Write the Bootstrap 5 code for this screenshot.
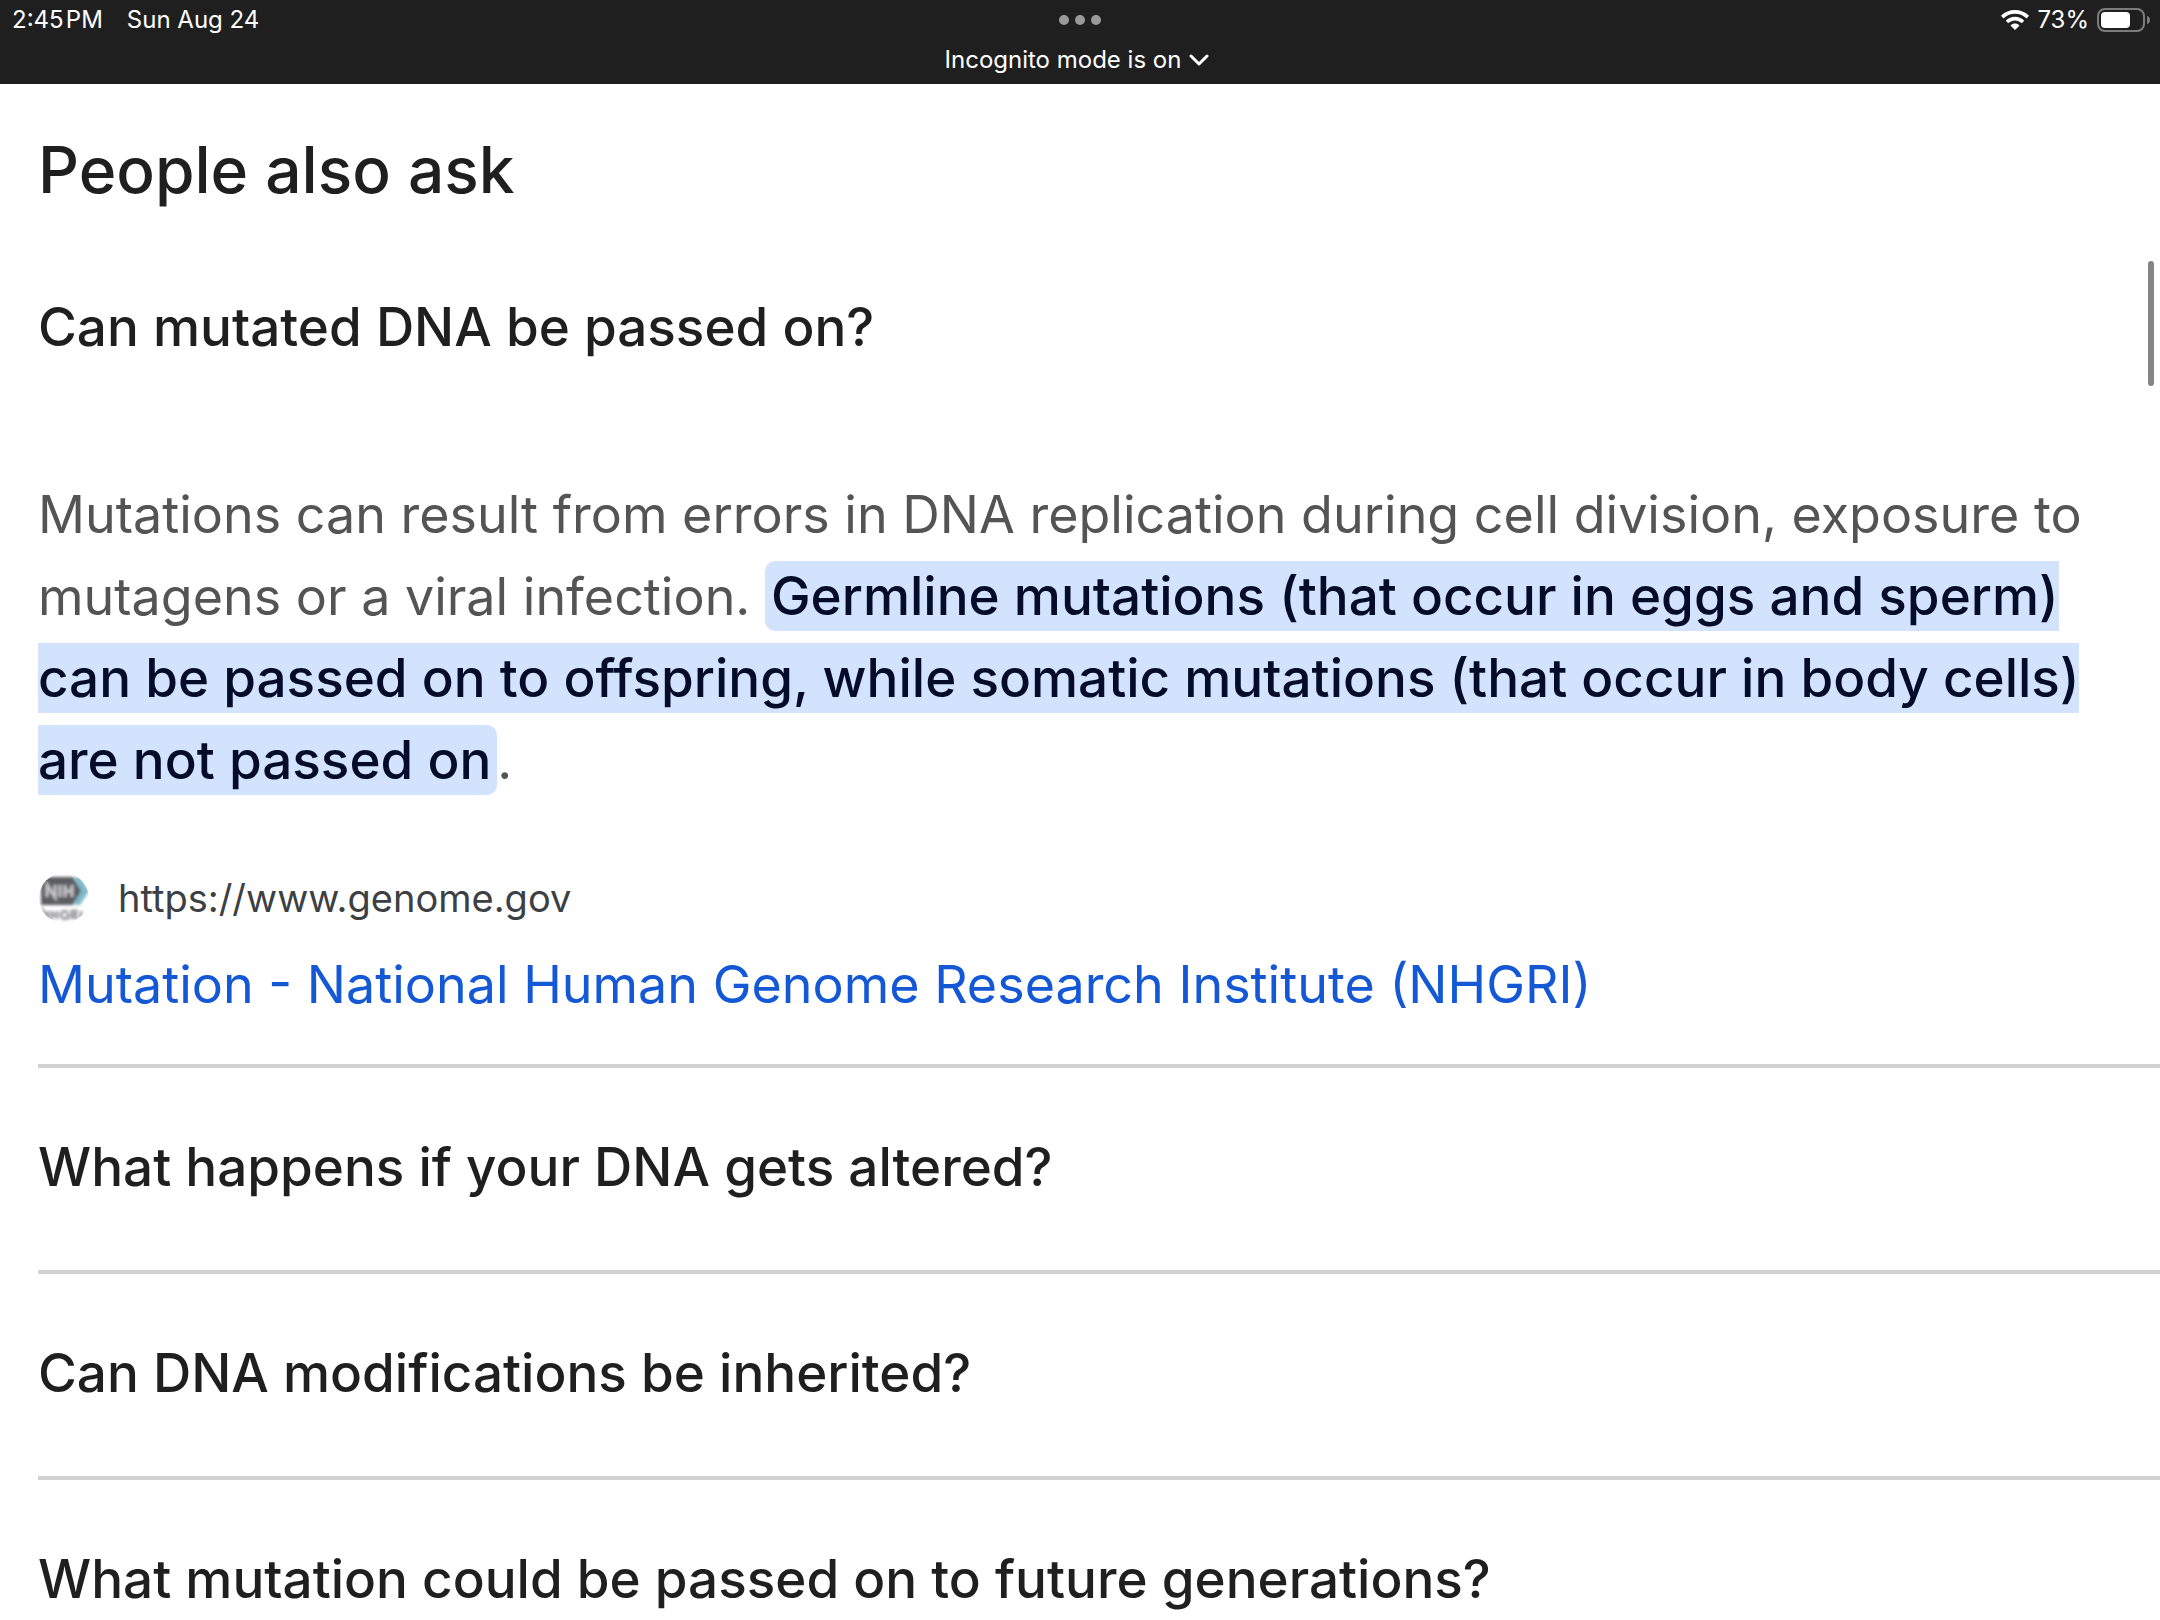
<!DOCTYPE html>
<html lang="en">
<head>
<meta charset="utf-8">
<meta name="viewport" content="width=device-width, initial-scale=1">
<title>People also ask</title>
<link href="https://cdn.jsdelivr.net/npm/bootstrap@5.3.0/dist/css/bootstrap.min.css" rel="stylesheet">
<style>
body { font-family: Inter, "Liberation Sans", sans-serif; color: #1f1f1f; background: #fff; }
.top-bar { background: #1f1f1f; height: 84px; font-size: 24px; line-height: 40px; color: #fff; }
.side { height: 40px; }
.side-left { padding-left: 12px; gap: 24px; }
.side-right { padding-right: 9px; gap: 8px; }
.incognito { font-size: 24px; line-height: 40px; gap: 8px; color: #fff; margin-right: 6px; }
.dots-btn { height: 40px; }
.results { padding-left: 38px; }
.page-title { font-size: 64px; line-height: 80px; font-weight: 500; padding-top: 46px; }
.question { font-size: 53px; line-height: 66px; font-weight: 500; color: #1f1f1f; }
.q-open { padding-top: 84px; }
.q-row { height: 206px; border-top: 4px solid #d2d2d2; padding: 0 0 4px; }
.answer { font-size: 52px; line-height: 82px; color: #545454; padding-top: 114px; }
.hl { font-size: 53px; line-height: 1; background: #d3e3fd; color: #040c28; font-weight: 500; border-radius: 10px; padding: 3px 6px; }
.source { gap: 28px; padding-top: 70px; font-size: 38px; line-height: 52px; color: #3c4043; }
.result-link { font-size: 52px; line-height: 66px; color: #1558d6; padding: 28px 0 46px; }
.scroll-thumb { right: 6px; top: 261px; width: 6px; height: 125px; background: #848484; }
</style>
<script src="https://cdn.jsdelivr.net/npm/bootstrap@5.3.0/dist/js/bootstrap.bundle.min.js"></script>
</head>
<body class="vh-100 overflow-hidden position-relative">
<header class="top-bar row g-0">
  <div class="side side-left col-4 d-flex"><span>2:45&#8202;PM</span><span>Sun Aug 24</span></div>
  <div class="col-4 d-flex flex-column align-items-center">
    <button type="button" class="dots-btn btn p-0 border-0 d-flex align-items-center" aria-label="Window controls">
      <svg width="42" height="10" viewBox="0 0 42 10" fill="#999"><circle cx="5" cy="5" r="5"/><circle cx="21" cy="5" r="5"/><circle cx="37" cy="5" r="5"/></svg>
    </button>
    <button type="button" class="incognito btn p-0 border-0 d-flex align-items-center">Incognito mode is on
      <svg width="20" height="12" viewBox="0 0 20 12" fill="none" stroke="#fff" stroke-width="3" stroke-linecap="round" stroke-linejoin="round"><path d="M2 2l8 8 8-8"/></svg>
    </button>
  </div>
  <div class="side side-right col-4 d-flex justify-content-end align-items-center">
    <svg width="28" height="20" viewBox="0 0 28 20" fill="#fff" aria-hidden="true">
      <path d="M14 0C8.700 0 3.900 2 .4 5.300c-.3.300-.3.700 0 1l1.600 1.600c.3.300.7.300 1 0C5.900 5.200 9.700 3.700 14 3.700s8.100 1.500 11 4.200c.3.300.7.300 1 0l1.600-1.600c.3-.3.300-.7 0-1C24.100 2 19.300 0 14 0z"/>
      <path d="M14 6.800c-3.400 0-6.500 1.300-8.800 3.400-.3.300-.3.700 0 1l1.600 1.600c.3.300.7.300 1 0 1.600-1.500 3.800-2.400 6.200-2.400s4.600.9 6.200 2.400c.3.300.7.300 1 0l1.600-1.600c.3-.3.300-.7 0-1-2.300-2.100-5.400-3.400-8.800-3.400z"/>
      <path d="M14 13.400c-1.600 0-3 .6-4.100 1.500-.3.300-.3.700 0 1l3.600 3.700c.3.300.7.300 1 0l3.600-3.700c.3-.3.300-.7 0-1-1.100-.9-2.500-1.500-4.100-1.500z"/>
    </svg>
    <span>73%</span>
    <svg width="54" height="24" viewBox="0 0 54 24" aria-hidden="true"><rect x="1" y="1" width="46" height="22" rx="7" fill="none" stroke="#7c7c7c" stroke-width="2"/><rect x="4" y="4" width="29" height="16" rx="4" fill="#fff"/><path d="M50 8c2 .6 3 2 3 4s-1 3.400-3 4z" fill="#7c7c7c"/></svg>
  </div>
</header>
<main class="results">
  <h1 class="page-title m-0">People also ask</h1>
  <h2 class="question q-open m-0">Can mutated DNA be passed on?</h2>
  <p class="answer m-0">Mutations can result from errors in DNA replication during cell division, exposure to<br>mutagens or a viral infection. <span class="hl">Germline mutations (that occur in eggs and sperm)<br>can be passed on to offspring, while somatic mutations (that occur in body cells)<br>are not passed on</span>.</p>
  <div class="source d-flex align-items-center">
    <svg width="52" height="52" viewBox="0 0 52 52" aria-hidden="true">
      <defs><filter id="soft"><feGaussianBlur stdDeviation="1.700"/></filter><clipPath id="disc"><circle cx="26" cy="26" r="25"/></clipPath></defs>
      <g clip-path="url(#disc)"><g filter="url(#soft)">
        <path d="M36 5h6l9 14-9 14h-6l6-14z" fill="#7fb9cb"/>
        <path d="M3 5h32l8 14-8 14H3z" fill="#5c5d62"/>
        <path d="M9 25V13l8 12V13M22 13v12M27 13v12M27 19h7M34 13v12" fill="none" stroke="#c9c9cc" stroke-width="3"/>
        <path d="M5 47V39l5 8v-8M14 39v8M14 43h5M19 39v8M30 40c-4-2-7 0-7 3s4 5 7 3v-3h-2M34 47v-8h4v4h-4l5 4M43 39v8" fill="none" stroke="#a2a2a5" stroke-width="3"/>
      </g></g>
    </svg>
    <cite class="fst-normal">https://www.genome.gov</cite>
  </div>
  <a href="#" class="result-link d-block text-decoration-none">Mutation - National Human Genome Research Institute (NHGRI)</a>
  <button type="button" class="q-row question btn rounded-0 border-start-0 border-end-0 border-bottom-0 w-100 text-start d-flex align-items-center">What happens if your DNA gets altered?</button>
  <button type="button" class="q-row question btn rounded-0 border-start-0 border-end-0 border-bottom-0 w-100 text-start d-flex align-items-center">Can DNA modifications be inherited?</button>
  <button type="button" class="q-row question btn rounded-0 border-start-0 border-end-0 border-bottom-0 w-100 text-start d-flex align-items-center">What mutation could be passed on to future generations?</button>
</main>
<div class="scroll-thumb position-absolute rounded-pill"></div>
</body>
</html>
